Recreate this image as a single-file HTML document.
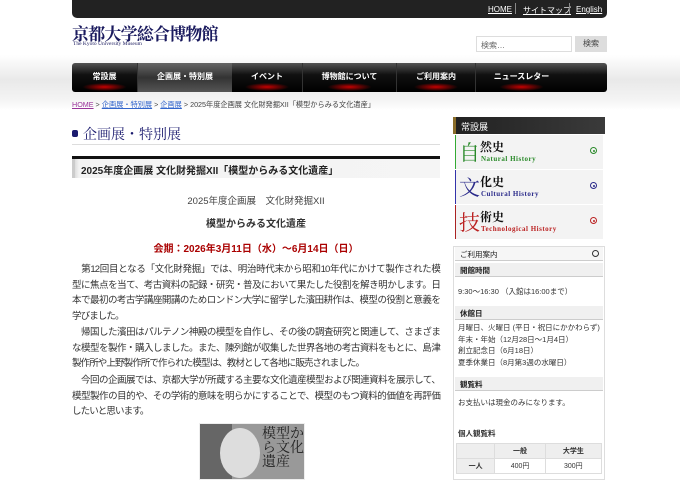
<!DOCTYPE html>
<html><head><meta charset="utf-8"><style>
*{margin:0;padding:0;box-sizing:border-box}
body{width:680px;height:480px;overflow:hidden;background:#fff;font-family:"Liberation Sans","Noto Sans CJK JP",sans-serif;color:#333;position:relative}
.bg{position:absolute;left:0;top:0;width:680px;height:110px;background:linear-gradient(#fff 0,#fff 55px,#e9e9e9 80px,#f4f4f4 100px,#fff 110px)}
.a{position:absolute}
.top{left:72px;top:0;width:535px;height:18px;background:#222;border-radius:0 0 5px 5px;font-size:8px;color:#fff}
.top span{position:absolute;top:5px;text-decoration:underline}
.logo{left:72px;top:20px;font-family:"Liberation Serif","Noto Serif CJK SC",serif;font-size:17px;color:#1a1a5e;font-weight:bold;letter-spacing:-0.8px}
.logo2{left:73px;top:41px;font-family:"Liberation Serif",serif;font-size:5.5px;color:#1a1a5e}
.search{left:476px;top:36px;width:96px;height:16px;border:1px solid #ddd;background:#fff;font-size:8px;color:#666;padding:3px 4px}
.sbtn{left:575px;top:36px;width:32px;height:16px;background:#ddd;font-size:8px;color:#444;text-align:center;line-height:16px}
.nav{left:72px;top:63px;width:535px;height:29px;background:linear-gradient(#555,#111 40%,#000);border-radius:3px;display:flex;font-size:8px;color:#fff;font-weight:bold}
.nav div{height:29px;line-height:27px;text-align:center;border-right:1px solid #333;background:radial-gradient(ellipse 22px 4px at 50% 24px,rgba(220,0,0,.9),transparent)}
.crumb{left:72px;top:100px;font-size:7.2px;color:#444}
.crumb u{color:#36c}
h1{position:absolute;left:72px;top:124px;font-family:"Liberation Serif","Noto Serif CJK SC",serif;font-weight:normal;font-size:14px;color:#1a1a6e}
.hr1{left:72px;top:144px;width:368px;height:1px;background:#ddd}
.hr2{left:72px;top:156px;width:368px;height:3px;background:#111}
.h2{left:72px;top:159px;width:368px;height:19px;background:linear-gradient(90deg,#ddd,#f3f3f3 4px,#f5f5f5);border-left:3px solid #ccc;font-size:10px;font-weight:bold;color:#222;padding:3px 6px}
.c{left:72px;width:368px;text-align:center;font-size:9.5px}
.p{left:72px;width:368px;font-size:9.5px;line-height:15.5px;color:#333;letter-spacing:-0.9px}
.p div{white-space:nowrap;height:15.5px;text-align:justify;text-align-last:justify}
.p div.l{text-align-last:left}
.book{left:199px;top:423px;width:106px;height:57px;background:#999;border:1px solid #eee;overflow:hidden}
.sh{left:453px;top:117px;width:152px;height:17px;background:linear-gradient(90deg,#222,#3a3a3a);border-left:3px solid #8a6d2a;color:#fff;font-size:9px;padding:3px 5px}
.hist{left:455px;width:148px;height:34px;background:#f3f3f3;border-left:1px solid}
.hist b{position:absolute;left:3px;top:2px;font-family:"Liberation Serif","Noto Serif CJK SC",serif;font-size:21px;font-weight:normal}
.hist i{position:absolute;left:24px;top:3px;font-family:"Liberation Serif","Noto Serif CJK SC",serif;font-style:normal;font-size:12px;color:#111;font-weight:bold}
.hist s{position:absolute;left:25px;top:20px;font-family:"Liberation Serif",serif;text-decoration:none;font-size:7px;letter-spacing:.5px;font-weight:bold}
.hist em{position:absolute;right:6px;top:12px;width:7px;height:7px;border:1px solid;border-radius:50%}
.hist em:after{content:"";position:absolute;left:1.5px;top:1.5px;width:2px;height:2px;border-radius:50%;background:currentColor}
.box{left:453px;top:246px;width:152px;height:234px;border:1px solid #ddd}
.bh{left:455px;width:148px;height:14px;background:#f0f0f0;border-bottom:1px solid #ccc;font-size:7.5px;font-weight:bold;color:#222;padding:2px 5px}
.t{left:458px;font-size:7.5px;line-height:11.5px;color:#333}
table{position:absolute;left:456px;top:443px;width:146px;border-collapse:collapse;font-size:7px}
td{border:1px solid #ddd;height:15px;text-align:center}
</style></head><body>
<div class="bg"></div>
<div class="a top"><span style="left:416px">HOME</span><span style="left:451px;color:#fff">サイトマップ</span><span style="left:504px">English</span><span style="left:443px;top:3px;width:1px;height:11px;background:#888"></span><span style="left:497px;top:3px;width:1px;height:11px;background:#888"></span></div>
<div class="a logo">京都大学総合博物館</div>
<div class="a logo2">The Kyoto University Museum</div>
<div class="a search">検索…</div><div class="a sbtn">検索</div>
<div class="a nav"><div style="width:66px">常設展</div><div style="width:94px;background:linear-gradient(#666,#333 50%,#555);border-right:0">企画展・特別展</div><div style="width:71px">イベント</div><div style="width:94px">博物館について</div><div style="width:79px">ご利用案内</div><div style="width:91px;border:0">ニュースレター</div></div>
<div class="a crumb"><u style="color:#939">HOME</u> &gt; <u>企画展・特別展</u> &gt; <u>企画展</u> &gt; 2025年度企画展 文化財発掘XII「模型からみる文化遺産」</div>
<h1><span style="display:inline-block;width:6px;height:7px;background:#1a1a6e;border-radius:2px;margin-right:5px;vertical-align:2px"></span>企画展・特別展</h1>
<div class="a hr1"></div><div class="a hr2"></div>
<div class="a h2">2025年度企画展 文化財発掘XII「模型からみる文化遺産」</div>
<div class="a c" style="top:193px;color:#444">2025年度企画展　文化財発掘XII</div>
<div class="a c" style="top:215px;font-weight:bold;font-size:10px">模型からみる文化遺産</div>
<div class="a c" style="top:240px;color:#a00;font-weight:bold;font-size:10px">会期：2026年3月11日（水）〜6月14日（日）</div>
<div class="a p" style="top:262px"><div>　第12回目となる「文化財発掘」では、明治時代末から昭和10年代にかけて製作された模</div><div>型に焦点を当て、考古資料の記録・研究・普及において果たした役割を解き明かします。日</div><div>本で最初の考古学講座開講のためロンドン大学に留学した濱田耕作は、模型の役割と意義を</div><div class="l">学びました。</div></div>
<div class="a p" style="top:325px"><div>　帰国した濱田はパルテノン神殿の模型を自作し、その後の調査研究と関連して、さまざま</div><div>な模型を製作・購入しました。また、陳列館が収集した世界各地の考古資料をもとに、島津</div><div class="l">製作所や上野製作所で作られた模型は、教材として各地に販売されました。</div></div>
<div class="a p" style="top:373px"><div>　今回の企画展では、京都大学が所蔵する主要な文化遺産模型および関連資料を展示して、</div><div>模型製作の目的や、その学術的意味を明らかにすることで、模型のもつ資料的価値を再評価</div><div class="l">したいと思います。</div></div>
<div class="a book"><div class="a" style="left:0;top:0;width:32px;height:57px;background:#666"></div><div class="a" style="left:20px;top:4px;width:40px;height:50px;border-radius:50%;background:#ddd"></div><div class="a" style="left:62px;top:2px;font-family:'Noto Serif CJK SC',serif;font-size:14px;line-height:14px;color:#222;width:44px">模型から文化遺産</div></div>
<div class="a sh">常設展</div>
<div class="a hist" style="top:135px;border-color:#3a3;color:#2a8a2a"><b>自</b><i>然史</i><s>Natural History</s><em></em></div>
<div class="a hist" style="top:170px;border-color:#33a;color:#2a2a8a"><b>文</b><i>化史</i><s>Cultural History</s><em></em></div>
<div class="a hist" style="top:205px;border-color:#a22;color:#b22"><b>技</b><i>術史</i><s>Technological History</s><em></em></div>
<div class="a box"></div>
<div class="a bh" style="top:247px;background:#f6f6f6;font-weight:normal">ご利用案内<span style="position:absolute;right:4px;top:3px;width:7px;height:7px;border:1px solid #333;border-radius:50%"></span></div>
<div class="a bh" style="top:263px">開館時間</div>
<div class="a t" style="top:286px">9:30〜16:30 （入館は16:00まで）</div>
<div class="a bh" style="top:306px">休館日</div>
<div class="a t" style="top:322px">月曜日、火曜日 (平日・祝日にかかわらず)<br>年末・年始（12月28日〜1月4日）<br>創立記念日（6月18日）<br>夏季休業日（8月第3週の水曜日）</div>
<div class="a bh" style="top:377px">観覧料</div>
<div class="a t" style="top:397px">お支払いは現金のみになります。</div>
<div class="a t" style="top:428px;font-weight:bold">個人観覧料</div>
<table><tr style="background:#eee;font-weight:bold"><td></td><td>一般</td><td>大学生</td></tr><tr><td style="background:#eee;font-weight:bold">一人</td><td>400円</td><td>300円</td></tr></table>
</body></html>
